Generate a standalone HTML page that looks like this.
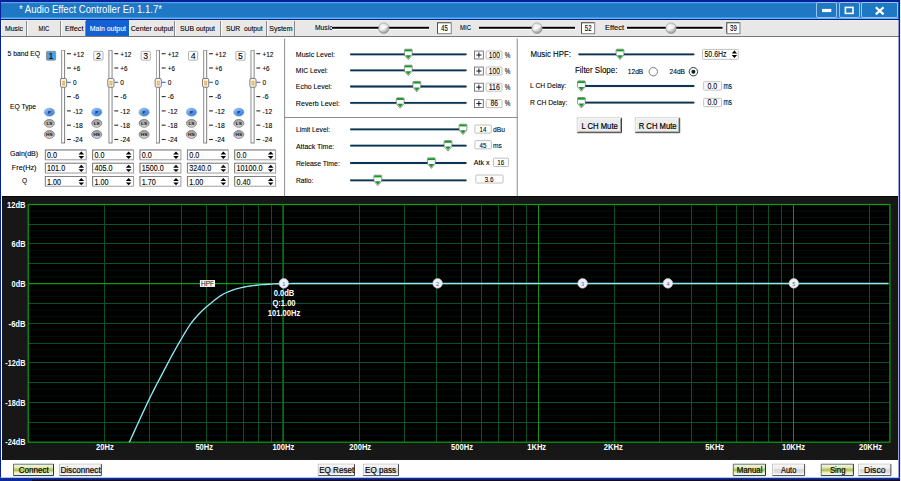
<!DOCTYPE html><html><head><meta charset="utf-8"><title>Audio Effect Controller En 1.1.7</title><style>
*{box-sizing:border-box;margin:0;padding:0}
html,body{width:901px;height:481px;overflow:hidden;background:#fff}
body{font-family:"Liberation Sans",sans-serif;font-size:8px;color:#000;position:relative}
.a{position:absolute}
.tab{position:absolute;top:20.5px;height:15.5px;background:#e8e8e8;border-right:1px solid #8a8a8a;border-left:1px solid #fafafa}
.sp{position:absolute;height:11px;background:#fff;border:1px solid #8c8c8c;border-top-color:#6a6a6a;border-left-color:#6a6a6a}
.vb{position:absolute;background:#fff;border:1px solid #c8c8c8;border-radius:1.5px}
.btn{position:absolute;border:1px solid #fff;border-right-color:#555;border-bottom-color:#555;background:#ececec;box-shadow:0 0 0 0.6px #8a8a8a}
svg text{white-space:pre}
</style></head><body>
<div class="a" style="left:0;top:0;width:900px;height:481px;background:#06209a"></div>
<div class="a" style="left:1px;top:2px;width:898px;height:17px;background:linear-gradient(#5aa4e8 0,#5aa4e8 1.1px,#1e78c4 1.6px,#1e78c4 15.2px,#5cb4f0 15.8px,#5cb4f0 17px)"></div>
<div class="a" style="left:1px;top:20px;width:898px;height:17px;background:#e8e8e8;border-top:0.5px solid #f4ecd8;border-bottom:1px solid #767676"></div>
<div class="a" style="left:1.2px;top:37px;width:897.6px;height:441px;background:#fff"></div>
<div class="a" style="left:2.1px;top:196.3px;width:895.8px;height:264px;background:#171717;border-top:1px solid #050505"></div>
<div class="a" style="left:815.6px;top:2.2px;width:21.6px;height:16.3px;border:1px solid #9cc4f0;border-radius:2px;background:#1e78c4"></div>
<div class="a" style="left:839px;top:2.2px;width:20.6px;height:16.3px;border:1px solid #9cc4f0;border-radius:2px;background:#1e78c4"></div>
<div class="a" style="left:861px;top:2.2px;width:37px;height:16.3px;border:1px solid #9cc4f0;border-radius:2px;background:#1e78c4"></div>
<div class="tab" style="left:1px;width:26px;"></div>
<div class="tab" style="left:27px;width:34px;"></div>
<div class="tab" style="left:61px;width:25px;"></div>
<div class="tab" style="left:86px;width:42.5px;background:#1262d4;border-left-color:#1262d4;border-right-color:#1262d4;top:20px;height:16.2px"></div>
<div class="tab" style="left:128.5px;width:46px;"></div>
<div class="tab" style="left:174.5px;width:46.5px;"></div>
<div class="tab" style="left:221px;width:46px;"></div>
<div class="tab" style="left:267px;width:28px;"></div>
<svg class="a" style="left:0;top:0" width="901" height="481" viewBox="0 0 901 481"><rect x="898.6" y="0" width="1.5" height="481" fill="#06209a"/><rect x="0" y="477.5" width="900" height="1" fill="#6a8ad8"/><rect x="0" y="478.1" width="900" height="3" fill="#0a2a9c"/><rect x="32" y="479.6" width="868" height="1.5" fill="#140a1c"/><rect x="822" y="8.9" width="9.3" height="3.2" fill="#fff"/><rect x="845.4" y="7.4" width="7.6" height="6" fill="none" stroke="#fff" stroke-width="1.6"/><path d="M875.8 7.2L883.6 14.4M883.6 7.2L875.8 14.4" stroke="#fff" stroke-width="2.2"/><text x="19.00" y="13.10" textLength="143.00" lengthAdjust="spacingAndGlyphs" style="font-family:'Liberation Sans',sans-serif;font-size:10.4px;fill:#fff" stroke="none">* Audio Effect Controller En 1.1.7*</text><text x="5.00" y="30.60" textLength="18.00" lengthAdjust="spacingAndGlyphs" style="font-family:'Liberation Sans',sans-serif;font-size:7.6px;fill:#000"  stroke="#000" stroke-width="0.1">Music</text><text x="38.50" y="30.60" textLength="10.80" lengthAdjust="spacingAndGlyphs" style="font-family:'Liberation Sans',sans-serif;font-size:7.6px;fill:#000"  stroke="#000" stroke-width="0.1">MIC</text><text x="65.00" y="30.60" textLength="18.50" lengthAdjust="spacingAndGlyphs" style="font-family:'Liberation Sans',sans-serif;font-size:7.6px;fill:#000"  stroke="#000" stroke-width="0.1">Effect</text><text x="89.80" y="30.60" textLength="36.20" lengthAdjust="spacingAndGlyphs" style="font-family:'Liberation Sans',sans-serif;font-size:7.6px;fill:#fff"  stroke="#fff" stroke-width="0.1">Main output</text><text x="130.80" y="30.60" textLength="42.50" lengthAdjust="spacingAndGlyphs" style="font-family:'Liberation Sans',sans-serif;font-size:7.6px;fill:#000"  stroke="#000" stroke-width="0.1">Center output</text><text x="180.00" y="30.60" textLength="35.00" lengthAdjust="spacingAndGlyphs" style="font-family:'Liberation Sans',sans-serif;font-size:7.6px;fill:#000"  stroke="#000" stroke-width="0.1">SUB output</text><text x="226.00" y="30.60" textLength="36.70" lengthAdjust="spacingAndGlyphs" style="font-family:'Liberation Sans',sans-serif;font-size:7.6px;fill:#000"  stroke="#000" stroke-width="0.1">SUR  output</text><text x="269.30" y="30.60" textLength="23.20" lengthAdjust="spacingAndGlyphs" style="font-family:'Liberation Sans',sans-serif;font-size:7.6px;fill:#000"  stroke="#000" stroke-width="0.1">System</text><defs><radialGradient id="kg" cx="0.4" cy="0.35" r="0.7"><stop offset="0" stop-color="#fff"/><stop offset="0.5" stop-color="#dcdcdc"/><stop offset="1" stop-color="#8a8a8a"/></radialGradient></defs><text x="315.00" y="30.30" textLength="17.60" lengthAdjust="spacingAndGlyphs" style="font-family:'Liberation Sans',sans-serif;font-size:7.6px;fill:#000"  stroke="#000" stroke-width="0.1">Music</text><rect x="332" y="25.9" width="97" height="3.9" fill="#fff"/><rect x="332" y="26.75" width="97" height="2" fill="#000"/><circle cx="383.8" cy="28.2" r="5.3" fill="url(#kg)" stroke="#8a8a8a" stroke-width="0.5"/><path d="M380.2 29.7L387.6 25.599999999999998" stroke="#fff" stroke-width="1.6" opacity="0.8"/><rect x="437.00" y="22.30" width="14.80" height="11.90" fill="#8c8c8c"/><rect x="437.00" y="22.30" width="13.80" height="10.90" fill="#505050"/><rect x="438.00" y="23.30" width="12.80" height="9.90" fill="#fff"/><text x="441.00" y="31.00" textLength="6.80" lengthAdjust="spacingAndGlyphs" style="font-family:'Liberation Sans',sans-serif;font-size:8.4px;fill:#000"  stroke="#000" stroke-width="0.1">45</text><text x="460.00" y="30.30" textLength="11.00" lengthAdjust="spacingAndGlyphs" style="font-family:'Liberation Sans',sans-serif;font-size:7.6px;fill:#000"  stroke="#000" stroke-width="0.1">MIC</text><rect x="479" y="25.9" width="96" height="3.9" fill="#fff"/><rect x="479" y="26.75" width="96" height="2" fill="#000"/><circle cx="537" cy="28.2" r="5.3" fill="url(#kg)" stroke="#8a8a8a" stroke-width="0.5"/><path d="M533.4 29.7L540.8 25.599999999999998" stroke="#fff" stroke-width="1.6" opacity="0.8"/><rect x="581.00" y="22.30" width="14.20" height="11.90" fill="#8c8c8c"/><rect x="581.00" y="22.30" width="13.20" height="10.90" fill="#505050"/><rect x="582.00" y="23.30" width="12.20" height="9.90" fill="#fff"/><text x="584.80" y="31.00" textLength="6.80" lengthAdjust="spacingAndGlyphs" style="font-family:'Liberation Sans',sans-serif;font-size:8.4px;fill:#000"  stroke="#000" stroke-width="0.1">52</text><text x="605.00" y="30.30" textLength="19.00" lengthAdjust="spacingAndGlyphs" style="font-family:'Liberation Sans',sans-serif;font-size:7.6px;fill:#000"  stroke="#000" stroke-width="0.1">Effect</text><rect x="627" y="25.9" width="95.5" height="3.9" fill="#fff"/><rect x="627" y="26.75" width="95.5" height="2" fill="#000"/><circle cx="671" cy="28.2" r="5.3" fill="url(#kg)" stroke="#8a8a8a" stroke-width="0.5"/><path d="M667.4 29.7L674.8 25.599999999999998" stroke="#fff" stroke-width="1.6" opacity="0.8"/><rect x="726.30" y="22.30" width="14.20" height="11.90" fill="#8c8c8c"/><rect x="726.30" y="22.30" width="13.20" height="10.90" fill="#505050"/><rect x="727.30" y="23.30" width="12.20" height="9.90" fill="#fff"/><text x="730.00" y="31.00" textLength="6.80" lengthAdjust="spacingAndGlyphs" style="font-family:'Liberation Sans',sans-serif;font-size:8.4px;fill:#000"  stroke="#000" stroke-width="0.1">39</text><text x="7.50" y="55.80" textLength="32.50" lengthAdjust="spacingAndGlyphs" style="font-family:'Liberation Sans',sans-serif;font-size:7.8px;fill:#000"  stroke="#000" stroke-width="0.1">5 band EQ</text><text x="9.90" y="108.60" textLength="26.20" lengthAdjust="spacingAndGlyphs" style="font-family:'Liberation Sans',sans-serif;font-size:7.8px;fill:#000"  stroke="#000" stroke-width="0.1">EQ Type</text><text x="9.90" y="155.60" textLength="28.30" lengthAdjust="spacingAndGlyphs" style="font-family:'Liberation Sans',sans-serif;font-size:7.8px;fill:#000"  stroke="#000" stroke-width="0.1">Gain(dB)</text><text x="11.80" y="170.00" textLength="24.70" lengthAdjust="spacingAndGlyphs" style="font-family:'Liberation Sans',sans-serif;font-size:7.8px;fill:#000"  stroke="#000" stroke-width="0.1">Fre(Hz)</text><text x="21.90" y="182.70" textLength="5.10" lengthAdjust="spacingAndGlyphs" style="font-family:'Liberation Sans',sans-serif;font-size:7.8px;fill:#000"  stroke="#000" stroke-width="0.1">Q</text><defs><linearGradient id="pb" x1="0.1" y1="0" x2="0.9" y2="1"><stop offset="0" stop-color="#9ccafa"/><stop offset="0.5" stop-color="#5c9ae6"/><stop offset="1" stop-color="#3c78d0"/></linearGradient><linearGradient id="gb" x1="0" y1="0" x2="0" y2="1"><stop offset="0" stop-color="#a0a0a0"/><stop offset="0.5" stop-color="#b4b4b4"/><stop offset="1" stop-color="#dedede"/></linearGradient></defs><rect x="46.45" y="51.35" width="9.20" height="8.80" rx="1" fill="#4a9fe6" stroke="#8a8a8a" stroke-width="0.9"/><text x="48.60" y="59.10" textLength="4.90" lengthAdjust="spacingAndGlyphs" style="font-family:'Liberation Sans',sans-serif;font-size:9.2px;fill:#000"  stroke="#000" stroke-width="0.1">1</text><rect x="61.30" y="50.00" width="3.80" height="93.40" fill="#646464"/><rect x="61.30" y="50.00" width="2.90" height="92.50" fill="#a4a4a4"/><rect x="62.20" y="50.90" width="2.00" height="91.60" fill="#fff"/><rect x="67.00" y="53.15" width="3.9" height="1.1" fill="#2a2a2a"/><text x="73.00" y="56.50" textLength="11.00" lengthAdjust="spacingAndGlyphs" style="font-family:'Liberation Sans',sans-serif;font-size:7.7px;fill:#000"  stroke="#000" stroke-width="0.1">+12</text><rect x="67.00" y="67.45" width="3.9" height="1.1" fill="#2a2a2a"/><text x="73.00" y="70.80" textLength="7.20" lengthAdjust="spacingAndGlyphs" style="font-family:'Liberation Sans',sans-serif;font-size:7.7px;fill:#000"  stroke="#000" stroke-width="0.1">+6</text><rect x="67.00" y="81.75" width="3.9" height="1.1" fill="#2a6ae0"/><text x="73.00" y="85.10" textLength="3.60" lengthAdjust="spacingAndGlyphs" style="font-family:'Liberation Sans',sans-serif;font-size:7.7px;fill:#000"  stroke="#000" stroke-width="0.1">0</text><rect x="67.00" y="96.05" width="3.9" height="1.1" fill="#2a2a2a"/><text x="73.00" y="99.40" textLength="6.20" lengthAdjust="spacingAndGlyphs" style="font-family:'Liberation Sans',sans-serif;font-size:7.7px;fill:#000"  stroke="#000" stroke-width="0.1">-6</text><rect x="67.00" y="110.35" width="3.9" height="1.1" fill="#2a2a2a"/><text x="73.00" y="113.70" textLength="9.80" lengthAdjust="spacingAndGlyphs" style="font-family:'Liberation Sans',sans-serif;font-size:7.7px;fill:#000"  stroke="#000" stroke-width="0.1">-12</text><rect x="67.00" y="124.65" width="3.9" height="1.1" fill="#2a2a2a"/><text x="73.00" y="128.00" textLength="9.80" lengthAdjust="spacingAndGlyphs" style="font-family:'Liberation Sans',sans-serif;font-size:7.7px;fill:#000"  stroke="#000" stroke-width="0.1">-18</text><rect x="67.00" y="138.95" width="3.9" height="1.1" fill="#2a2a2a"/><text x="73.00" y="142.30" textLength="9.80" lengthAdjust="spacingAndGlyphs" style="font-family:'Liberation Sans',sans-serif;font-size:7.7px;fill:#000"  stroke="#000" stroke-width="0.1">-24</text><rect x="60.45" y="78.45" width="6.20" height="8.80" rx="1.5" fill="#f6f6f2" stroke="#6e6e6e" stroke-width="0.9"/><rect x="62.10" y="80.7" width="3" height="4.8" fill="#f6d4a0"/><rect x="62.10" y="81" width="3" height="0.9" fill="#eca850"/><rect x="62.10" y="82.7" width="3" height="0.9" fill="#eca850"/><rect x="62.10" y="84.3" width="3" height="0.9" fill="#eca850"/><ellipse cx="49.40" cy="112.20" rx="5.2" ry="4.1" fill="url(#pb)" stroke="#7aa4e0" stroke-width="0.5"/><text x="47.90" y="113.60" textLength="3.00" lengthAdjust="spacingAndGlyphs" style="font-family:'Liberation Sans',sans-serif;font-size:4.2px;font-weight:bold;fill:#10203a" >P</text><ellipse cx="49.40" cy="123.35" rx="5" ry="3.9" fill="url(#gb)" stroke="#747474" stroke-width="0.8"/><text x="46.40" y="124.75" textLength="6.00" lengthAdjust="spacingAndGlyphs" style="font-family:'Liberation Sans',sans-serif;font-size:4.2px;font-weight:bold;fill:#111" >LS</text><ellipse cx="49.40" cy="134.50" rx="5" ry="3.9" fill="url(#gb)" stroke="#747474" stroke-width="0.8"/><text x="46.05" y="135.90" textLength="6.70" lengthAdjust="spacingAndGlyphs" style="font-family:'Liberation Sans',sans-serif;font-size:4.2px;font-weight:bold;fill:#111" >HS</text><rect x="44.90" y="149.60" width="41.80" height="10.70" fill="#9c9c9c"/><rect x="44.90" y="149.60" width="40.90" height="9.80" fill="#727272"/><rect x="45.80" y="150.50" width="40.00" height="8.90" fill="#fff"/><text x="47.10" y="158.10" textLength="10.03" lengthAdjust="spacingAndGlyphs" style="font-family:'Liberation Sans',sans-serif;font-size:8.2px;fill:#000"  stroke="#000" stroke-width="0.1">0.0</text><path d="M78.50 154.50h5.6l-2.8-2.9zM78.50 156.00h5.6l-2.8 2.9z" fill="#000"/><rect x="44.90" y="162.80" width="41.80" height="10.70" fill="#9c9c9c"/><rect x="44.90" y="162.80" width="40.90" height="9.80" fill="#727272"/><rect x="45.80" y="163.70" width="40.00" height="8.90" fill="#fff"/><text x="47.10" y="171.30" textLength="18.05" lengthAdjust="spacingAndGlyphs" style="font-family:'Liberation Sans',sans-serif;font-size:8.2px;fill:#000"  stroke="#000" stroke-width="0.1">101.0</text><path d="M78.50 167.70h5.6l-2.8-2.9zM78.50 169.20h5.6l-2.8 2.9z" fill="#000"/><rect x="44.90" y="176.00" width="41.80" height="10.70" fill="#9c9c9c"/><rect x="44.90" y="176.00" width="40.90" height="9.80" fill="#727272"/><rect x="45.80" y="176.90" width="40.00" height="8.90" fill="#fff"/><text x="47.10" y="184.50" textLength="14.04" lengthAdjust="spacingAndGlyphs" style="font-family:'Liberation Sans',sans-serif;font-size:8.2px;fill:#000"  stroke="#000" stroke-width="0.1">1.00</text><path d="M78.50 180.90h5.6l-2.8-2.9zM78.50 182.40h5.6l-2.8 2.9z" fill="#000"/><rect x="93.80" y="51.35" width="9.20" height="8.80" rx="1" fill="#fff" stroke="#a8a8a8" stroke-width="0.9"/><text x="95.95" y="59.10" textLength="4.90" lengthAdjust="spacingAndGlyphs" style="font-family:'Liberation Sans',sans-serif;font-size:9.2px;fill:#000"  stroke="#000" stroke-width="0.1">2</text><rect x="108.65" y="50.00" width="3.80" height="93.40" fill="#646464"/><rect x="108.65" y="50.00" width="2.90" height="92.50" fill="#a4a4a4"/><rect x="109.55" y="50.90" width="2.00" height="91.60" fill="#fff"/><rect x="114.35" y="53.15" width="3.9" height="1.1" fill="#2a2a2a"/><text x="120.35" y="56.50" textLength="11.00" lengthAdjust="spacingAndGlyphs" style="font-family:'Liberation Sans',sans-serif;font-size:7.7px;fill:#000"  stroke="#000" stroke-width="0.1">+12</text><rect x="114.35" y="67.45" width="3.9" height="1.1" fill="#2a2a2a"/><text x="120.35" y="70.80" textLength="7.20" lengthAdjust="spacingAndGlyphs" style="font-family:'Liberation Sans',sans-serif;font-size:7.7px;fill:#000"  stroke="#000" stroke-width="0.1">+6</text><rect x="114.35" y="81.75" width="3.9" height="1.1" fill="#2a6ae0"/><text x="120.35" y="85.10" textLength="3.60" lengthAdjust="spacingAndGlyphs" style="font-family:'Liberation Sans',sans-serif;font-size:7.7px;fill:#000"  stroke="#000" stroke-width="0.1">0</text><rect x="114.35" y="96.05" width="3.9" height="1.1" fill="#2a2a2a"/><text x="120.35" y="99.40" textLength="6.20" lengthAdjust="spacingAndGlyphs" style="font-family:'Liberation Sans',sans-serif;font-size:7.7px;fill:#000"  stroke="#000" stroke-width="0.1">-6</text><rect x="114.35" y="110.35" width="3.9" height="1.1" fill="#2a2a2a"/><text x="120.35" y="113.70" textLength="9.80" lengthAdjust="spacingAndGlyphs" style="font-family:'Liberation Sans',sans-serif;font-size:7.7px;fill:#000"  stroke="#000" stroke-width="0.1">-12</text><rect x="114.35" y="124.65" width="3.9" height="1.1" fill="#2a2a2a"/><text x="120.35" y="128.00" textLength="9.80" lengthAdjust="spacingAndGlyphs" style="font-family:'Liberation Sans',sans-serif;font-size:7.7px;fill:#000"  stroke="#000" stroke-width="0.1">-18</text><rect x="114.35" y="138.95" width="3.9" height="1.1" fill="#2a2a2a"/><text x="120.35" y="142.30" textLength="9.80" lengthAdjust="spacingAndGlyphs" style="font-family:'Liberation Sans',sans-serif;font-size:7.7px;fill:#000"  stroke="#000" stroke-width="0.1">-24</text><rect x="107.80" y="78.45" width="6.20" height="8.80" rx="1.5" fill="#f6f6f2" stroke="#6e6e6e" stroke-width="0.9"/><rect x="109.45" y="80.7" width="3" height="4.8" fill="#f6d4a0"/><rect x="109.45" y="81" width="3" height="0.9" fill="#eca850"/><rect x="109.45" y="82.7" width="3" height="0.9" fill="#eca850"/><rect x="109.45" y="84.3" width="3" height="0.9" fill="#eca850"/><ellipse cx="96.75" cy="112.20" rx="5.2" ry="4.1" fill="url(#pb)" stroke="#7aa4e0" stroke-width="0.5"/><text x="95.25" y="113.60" textLength="3.00" lengthAdjust="spacingAndGlyphs" style="font-family:'Liberation Sans',sans-serif;font-size:4.2px;font-weight:bold;fill:#10203a" >P</text><ellipse cx="96.75" cy="123.35" rx="5" ry="3.9" fill="url(#gb)" stroke="#747474" stroke-width="0.8"/><text x="93.75" y="124.75" textLength="6.00" lengthAdjust="spacingAndGlyphs" style="font-family:'Liberation Sans',sans-serif;font-size:4.2px;font-weight:bold;fill:#111" >LS</text><ellipse cx="96.75" cy="134.50" rx="5" ry="3.9" fill="url(#gb)" stroke="#747474" stroke-width="0.8"/><text x="93.40" y="135.90" textLength="6.70" lengthAdjust="spacingAndGlyphs" style="font-family:'Liberation Sans',sans-serif;font-size:4.2px;font-weight:bold;fill:#111" >HS</text><rect x="92.25" y="149.60" width="41.80" height="10.70" fill="#9c9c9c"/><rect x="92.25" y="149.60" width="40.90" height="9.80" fill="#727272"/><rect x="93.15" y="150.50" width="40.00" height="8.90" fill="#fff"/><text x="94.45" y="158.10" textLength="10.03" lengthAdjust="spacingAndGlyphs" style="font-family:'Liberation Sans',sans-serif;font-size:8.2px;fill:#000"  stroke="#000" stroke-width="0.1">0.0</text><path d="M125.85 154.50h5.6l-2.8-2.9zM125.85 156.00h5.6l-2.8 2.9z" fill="#000"/><rect x="92.25" y="162.80" width="41.80" height="10.70" fill="#9c9c9c"/><rect x="92.25" y="162.80" width="40.90" height="9.80" fill="#727272"/><rect x="93.15" y="163.70" width="40.00" height="8.90" fill="#fff"/><text x="94.45" y="171.30" textLength="18.05" lengthAdjust="spacingAndGlyphs" style="font-family:'Liberation Sans',sans-serif;font-size:8.2px;fill:#000"  stroke="#000" stroke-width="0.1">405.0</text><path d="M125.85 167.70h5.6l-2.8-2.9zM125.85 169.20h5.6l-2.8 2.9z" fill="#000"/><rect x="92.25" y="176.00" width="41.80" height="10.70" fill="#9c9c9c"/><rect x="92.25" y="176.00" width="40.90" height="9.80" fill="#727272"/><rect x="93.15" y="176.90" width="40.00" height="8.90" fill="#fff"/><text x="94.45" y="184.50" textLength="14.04" lengthAdjust="spacingAndGlyphs" style="font-family:'Liberation Sans',sans-serif;font-size:8.2px;fill:#000"  stroke="#000" stroke-width="0.1">1.00</text><path d="M125.85 180.90h5.6l-2.8-2.9zM125.85 182.40h5.6l-2.8 2.9z" fill="#000"/><rect x="141.15" y="51.35" width="9.20" height="8.80" rx="1" fill="#fff" stroke="#a8a8a8" stroke-width="0.9"/><text x="143.30" y="59.10" textLength="4.90" lengthAdjust="spacingAndGlyphs" style="font-family:'Liberation Sans',sans-serif;font-size:9.2px;fill:#000"  stroke="#000" stroke-width="0.1">3</text><rect x="156.00" y="50.00" width="3.80" height="93.40" fill="#646464"/><rect x="156.00" y="50.00" width="2.90" height="92.50" fill="#a4a4a4"/><rect x="156.90" y="50.90" width="2.00" height="91.60" fill="#fff"/><rect x="161.70" y="53.15" width="3.9" height="1.1" fill="#2a2a2a"/><text x="167.70" y="56.50" textLength="11.00" lengthAdjust="spacingAndGlyphs" style="font-family:'Liberation Sans',sans-serif;font-size:7.7px;fill:#000"  stroke="#000" stroke-width="0.1">+12</text><rect x="161.70" y="67.45" width="3.9" height="1.1" fill="#2a2a2a"/><text x="167.70" y="70.80" textLength="7.20" lengthAdjust="spacingAndGlyphs" style="font-family:'Liberation Sans',sans-serif;font-size:7.7px;fill:#000"  stroke="#000" stroke-width="0.1">+6</text><rect x="161.70" y="81.75" width="3.9" height="1.1" fill="#2a6ae0"/><text x="167.70" y="85.10" textLength="3.60" lengthAdjust="spacingAndGlyphs" style="font-family:'Liberation Sans',sans-serif;font-size:7.7px;fill:#000"  stroke="#000" stroke-width="0.1">0</text><rect x="161.70" y="96.05" width="3.9" height="1.1" fill="#2a2a2a"/><text x="167.70" y="99.40" textLength="6.20" lengthAdjust="spacingAndGlyphs" style="font-family:'Liberation Sans',sans-serif;font-size:7.7px;fill:#000"  stroke="#000" stroke-width="0.1">-6</text><rect x="161.70" y="110.35" width="3.9" height="1.1" fill="#2a2a2a"/><text x="167.70" y="113.70" textLength="9.80" lengthAdjust="spacingAndGlyphs" style="font-family:'Liberation Sans',sans-serif;font-size:7.7px;fill:#000"  stroke="#000" stroke-width="0.1">-12</text><rect x="161.70" y="124.65" width="3.9" height="1.1" fill="#2a2a2a"/><text x="167.70" y="128.00" textLength="9.80" lengthAdjust="spacingAndGlyphs" style="font-family:'Liberation Sans',sans-serif;font-size:7.7px;fill:#000"  stroke="#000" stroke-width="0.1">-18</text><rect x="161.70" y="138.95" width="3.9" height="1.1" fill="#2a2a2a"/><text x="167.70" y="142.30" textLength="9.80" lengthAdjust="spacingAndGlyphs" style="font-family:'Liberation Sans',sans-serif;font-size:7.7px;fill:#000"  stroke="#000" stroke-width="0.1">-24</text><rect x="155.15" y="78.45" width="6.20" height="8.80" rx="1.5" fill="#f6f6f2" stroke="#6e6e6e" stroke-width="0.9"/><rect x="156.80" y="80.7" width="3" height="4.8" fill="#f6d4a0"/><rect x="156.80" y="81" width="3" height="0.9" fill="#eca850"/><rect x="156.80" y="82.7" width="3" height="0.9" fill="#eca850"/><rect x="156.80" y="84.3" width="3" height="0.9" fill="#eca850"/><ellipse cx="144.10" cy="112.20" rx="5.2" ry="4.1" fill="url(#pb)" stroke="#7aa4e0" stroke-width="0.5"/><text x="142.60" y="113.60" textLength="3.00" lengthAdjust="spacingAndGlyphs" style="font-family:'Liberation Sans',sans-serif;font-size:4.2px;font-weight:bold;fill:#10203a" >P</text><ellipse cx="144.10" cy="123.35" rx="5" ry="3.9" fill="url(#gb)" stroke="#747474" stroke-width="0.8"/><text x="141.10" y="124.75" textLength="6.00" lengthAdjust="spacingAndGlyphs" style="font-family:'Liberation Sans',sans-serif;font-size:4.2px;font-weight:bold;fill:#111" >LS</text><ellipse cx="144.10" cy="134.50" rx="5" ry="3.9" fill="url(#gb)" stroke="#747474" stroke-width="0.8"/><text x="140.75" y="135.90" textLength="6.70" lengthAdjust="spacingAndGlyphs" style="font-family:'Liberation Sans',sans-serif;font-size:4.2px;font-weight:bold;fill:#111" >HS</text><rect x="139.60" y="149.60" width="41.80" height="10.70" fill="#9c9c9c"/><rect x="139.60" y="149.60" width="40.90" height="9.80" fill="#727272"/><rect x="140.50" y="150.50" width="40.00" height="8.90" fill="#fff"/><text x="141.80" y="158.10" textLength="10.03" lengthAdjust="spacingAndGlyphs" style="font-family:'Liberation Sans',sans-serif;font-size:8.2px;fill:#000"  stroke="#000" stroke-width="0.1">0.0</text><path d="M173.20 154.50h5.6l-2.8-2.9zM173.20 156.00h5.6l-2.8 2.9z" fill="#000"/><rect x="139.60" y="162.80" width="41.80" height="10.70" fill="#9c9c9c"/><rect x="139.60" y="162.80" width="40.90" height="9.80" fill="#727272"/><rect x="140.50" y="163.70" width="40.00" height="8.90" fill="#fff"/><text x="141.80" y="171.30" textLength="22.07" lengthAdjust="spacingAndGlyphs" style="font-family:'Liberation Sans',sans-serif;font-size:8.2px;fill:#000"  stroke="#000" stroke-width="0.1">1500.0</text><path d="M173.20 167.70h5.6l-2.8-2.9zM173.20 169.20h5.6l-2.8 2.9z" fill="#000"/><rect x="139.60" y="176.00" width="41.80" height="10.70" fill="#9c9c9c"/><rect x="139.60" y="176.00" width="40.90" height="9.80" fill="#727272"/><rect x="140.50" y="176.90" width="40.00" height="8.90" fill="#fff"/><text x="141.80" y="184.50" textLength="14.04" lengthAdjust="spacingAndGlyphs" style="font-family:'Liberation Sans',sans-serif;font-size:8.2px;fill:#000"  stroke="#000" stroke-width="0.1">1.70</text><path d="M173.20 180.90h5.6l-2.8-2.9zM173.20 182.40h5.6l-2.8 2.9z" fill="#000"/><rect x="188.50" y="51.35" width="9.20" height="8.80" rx="1" fill="#fff" stroke="#a8a8a8" stroke-width="0.9"/><text x="190.65" y="59.10" textLength="4.90" lengthAdjust="spacingAndGlyphs" style="font-family:'Liberation Sans',sans-serif;font-size:9.2px;fill:#000"  stroke="#000" stroke-width="0.1">4</text><rect x="203.35" y="50.00" width="3.80" height="93.40" fill="#646464"/><rect x="203.35" y="50.00" width="2.90" height="92.50" fill="#a4a4a4"/><rect x="204.25" y="50.90" width="2.00" height="91.60" fill="#fff"/><rect x="209.05" y="53.15" width="3.9" height="1.1" fill="#2a2a2a"/><text x="215.05" y="56.50" textLength="11.00" lengthAdjust="spacingAndGlyphs" style="font-family:'Liberation Sans',sans-serif;font-size:7.7px;fill:#000"  stroke="#000" stroke-width="0.1">+12</text><rect x="209.05" y="67.45" width="3.9" height="1.1" fill="#2a2a2a"/><text x="215.05" y="70.80" textLength="7.20" lengthAdjust="spacingAndGlyphs" style="font-family:'Liberation Sans',sans-serif;font-size:7.7px;fill:#000"  stroke="#000" stroke-width="0.1">+6</text><rect x="209.05" y="81.75" width="3.9" height="1.1" fill="#2a6ae0"/><text x="215.05" y="85.10" textLength="3.60" lengthAdjust="spacingAndGlyphs" style="font-family:'Liberation Sans',sans-serif;font-size:7.7px;fill:#000"  stroke="#000" stroke-width="0.1">0</text><rect x="209.05" y="96.05" width="3.9" height="1.1" fill="#2a2a2a"/><text x="215.05" y="99.40" textLength="6.20" lengthAdjust="spacingAndGlyphs" style="font-family:'Liberation Sans',sans-serif;font-size:7.7px;fill:#000"  stroke="#000" stroke-width="0.1">-6</text><rect x="209.05" y="110.35" width="3.9" height="1.1" fill="#2a2a2a"/><text x="215.05" y="113.70" textLength="9.80" lengthAdjust="spacingAndGlyphs" style="font-family:'Liberation Sans',sans-serif;font-size:7.7px;fill:#000"  stroke="#000" stroke-width="0.1">-12</text><rect x="209.05" y="124.65" width="3.9" height="1.1" fill="#2a2a2a"/><text x="215.05" y="128.00" textLength="9.80" lengthAdjust="spacingAndGlyphs" style="font-family:'Liberation Sans',sans-serif;font-size:7.7px;fill:#000"  stroke="#000" stroke-width="0.1">-18</text><rect x="209.05" y="138.95" width="3.9" height="1.1" fill="#2a2a2a"/><text x="215.05" y="142.30" textLength="9.80" lengthAdjust="spacingAndGlyphs" style="font-family:'Liberation Sans',sans-serif;font-size:7.7px;fill:#000"  stroke="#000" stroke-width="0.1">-24</text><rect x="202.50" y="78.45" width="6.20" height="8.80" rx="1.5" fill="#f6f6f2" stroke="#6e6e6e" stroke-width="0.9"/><rect x="204.15" y="80.7" width="3" height="4.8" fill="#f6d4a0"/><rect x="204.15" y="81" width="3" height="0.9" fill="#eca850"/><rect x="204.15" y="82.7" width="3" height="0.9" fill="#eca850"/><rect x="204.15" y="84.3" width="3" height="0.9" fill="#eca850"/><ellipse cx="191.45" cy="112.20" rx="5.2" ry="4.1" fill="url(#pb)" stroke="#7aa4e0" stroke-width="0.5"/><text x="189.95" y="113.60" textLength="3.00" lengthAdjust="spacingAndGlyphs" style="font-family:'Liberation Sans',sans-serif;font-size:4.2px;font-weight:bold;fill:#10203a" >P</text><ellipse cx="191.45" cy="123.35" rx="5" ry="3.9" fill="url(#gb)" stroke="#747474" stroke-width="0.8"/><text x="188.45" y="124.75" textLength="6.00" lengthAdjust="spacingAndGlyphs" style="font-family:'Liberation Sans',sans-serif;font-size:4.2px;font-weight:bold;fill:#111" >LS</text><ellipse cx="191.45" cy="134.50" rx="5" ry="3.9" fill="url(#gb)" stroke="#747474" stroke-width="0.8"/><text x="188.10" y="135.90" textLength="6.70" lengthAdjust="spacingAndGlyphs" style="font-family:'Liberation Sans',sans-serif;font-size:4.2px;font-weight:bold;fill:#111" >HS</text><rect x="186.95" y="149.60" width="41.80" height="10.70" fill="#9c9c9c"/><rect x="186.95" y="149.60" width="40.90" height="9.80" fill="#727272"/><rect x="187.85" y="150.50" width="40.00" height="8.90" fill="#fff"/><text x="189.15" y="158.10" textLength="10.03" lengthAdjust="spacingAndGlyphs" style="font-family:'Liberation Sans',sans-serif;font-size:8.2px;fill:#000"  stroke="#000" stroke-width="0.1">0.0</text><path d="M220.55 154.50h5.6l-2.8-2.9zM220.55 156.00h5.6l-2.8 2.9z" fill="#000"/><rect x="186.95" y="162.80" width="41.80" height="10.70" fill="#9c9c9c"/><rect x="186.95" y="162.80" width="40.90" height="9.80" fill="#727272"/><rect x="187.85" y="163.70" width="40.00" height="8.90" fill="#fff"/><text x="189.15" y="171.30" textLength="22.07" lengthAdjust="spacingAndGlyphs" style="font-family:'Liberation Sans',sans-serif;font-size:8.2px;fill:#000"  stroke="#000" stroke-width="0.1">3240.0</text><path d="M220.55 167.70h5.6l-2.8-2.9zM220.55 169.20h5.6l-2.8 2.9z" fill="#000"/><rect x="186.95" y="176.00" width="41.80" height="10.70" fill="#9c9c9c"/><rect x="186.95" y="176.00" width="40.90" height="9.80" fill="#727272"/><rect x="187.85" y="176.90" width="40.00" height="8.90" fill="#fff"/><text x="189.15" y="184.50" textLength="14.04" lengthAdjust="spacingAndGlyphs" style="font-family:'Liberation Sans',sans-serif;font-size:8.2px;fill:#000"  stroke="#000" stroke-width="0.1">1.00</text><path d="M220.55 180.90h5.6l-2.8-2.9zM220.55 182.40h5.6l-2.8 2.9z" fill="#000"/><rect x="235.85" y="51.35" width="9.20" height="8.80" rx="1" fill="#fff" stroke="#a8a8a8" stroke-width="0.9"/><text x="238.00" y="59.10" textLength="4.90" lengthAdjust="spacingAndGlyphs" style="font-family:'Liberation Sans',sans-serif;font-size:9.2px;fill:#000"  stroke="#000" stroke-width="0.1">5</text><rect x="250.70" y="50.00" width="3.80" height="93.40" fill="#646464"/><rect x="250.70" y="50.00" width="2.90" height="92.50" fill="#a4a4a4"/><rect x="251.60" y="50.90" width="2.00" height="91.60" fill="#fff"/><rect x="256.40" y="53.15" width="3.9" height="1.1" fill="#2a2a2a"/><text x="262.40" y="56.50" textLength="11.00" lengthAdjust="spacingAndGlyphs" style="font-family:'Liberation Sans',sans-serif;font-size:7.7px;fill:#000"  stroke="#000" stroke-width="0.1">+12</text><rect x="256.40" y="67.45" width="3.9" height="1.1" fill="#2a2a2a"/><text x="262.40" y="70.80" textLength="7.20" lengthAdjust="spacingAndGlyphs" style="font-family:'Liberation Sans',sans-serif;font-size:7.7px;fill:#000"  stroke="#000" stroke-width="0.1">+6</text><rect x="256.40" y="81.75" width="3.9" height="1.1" fill="#2a6ae0"/><text x="262.40" y="85.10" textLength="3.60" lengthAdjust="spacingAndGlyphs" style="font-family:'Liberation Sans',sans-serif;font-size:7.7px;fill:#000"  stroke="#000" stroke-width="0.1">0</text><rect x="256.40" y="96.05" width="3.9" height="1.1" fill="#2a2a2a"/><text x="262.40" y="99.40" textLength="6.20" lengthAdjust="spacingAndGlyphs" style="font-family:'Liberation Sans',sans-serif;font-size:7.7px;fill:#000"  stroke="#000" stroke-width="0.1">-6</text><rect x="256.40" y="110.35" width="3.9" height="1.1" fill="#2a2a2a"/><text x="262.40" y="113.70" textLength="9.80" lengthAdjust="spacingAndGlyphs" style="font-family:'Liberation Sans',sans-serif;font-size:7.7px;fill:#000"  stroke="#000" stroke-width="0.1">-12</text><rect x="256.40" y="124.65" width="3.9" height="1.1" fill="#2a2a2a"/><text x="262.40" y="128.00" textLength="9.80" lengthAdjust="spacingAndGlyphs" style="font-family:'Liberation Sans',sans-serif;font-size:7.7px;fill:#000"  stroke="#000" stroke-width="0.1">-18</text><rect x="256.40" y="138.95" width="3.9" height="1.1" fill="#2a2a2a"/><text x="262.40" y="142.30" textLength="9.80" lengthAdjust="spacingAndGlyphs" style="font-family:'Liberation Sans',sans-serif;font-size:7.7px;fill:#000"  stroke="#000" stroke-width="0.1">-24</text><rect x="249.85" y="78.45" width="6.20" height="8.80" rx="1.5" fill="#f6f6f2" stroke="#6e6e6e" stroke-width="0.9"/><rect x="251.50" y="80.7" width="3" height="4.8" fill="#f6d4a0"/><rect x="251.50" y="81" width="3" height="0.9" fill="#eca850"/><rect x="251.50" y="82.7" width="3" height="0.9" fill="#eca850"/><rect x="251.50" y="84.3" width="3" height="0.9" fill="#eca850"/><ellipse cx="238.80" cy="112.20" rx="5.2" ry="4.1" fill="url(#pb)" stroke="#7aa4e0" stroke-width="0.5"/><text x="237.30" y="113.60" textLength="3.00" lengthAdjust="spacingAndGlyphs" style="font-family:'Liberation Sans',sans-serif;font-size:4.2px;font-weight:bold;fill:#10203a" >P</text><ellipse cx="238.80" cy="123.35" rx="5" ry="3.9" fill="url(#gb)" stroke="#747474" stroke-width="0.8"/><text x="235.80" y="124.75" textLength="6.00" lengthAdjust="spacingAndGlyphs" style="font-family:'Liberation Sans',sans-serif;font-size:4.2px;font-weight:bold;fill:#111" >LS</text><ellipse cx="238.80" cy="134.50" rx="5" ry="3.9" fill="url(#gb)" stroke="#747474" stroke-width="0.8"/><text x="235.45" y="135.90" textLength="6.70" lengthAdjust="spacingAndGlyphs" style="font-family:'Liberation Sans',sans-serif;font-size:4.2px;font-weight:bold;fill:#111" >HS</text><rect x="234.30" y="149.60" width="41.80" height="10.70" fill="#9c9c9c"/><rect x="234.30" y="149.60" width="40.90" height="9.80" fill="#727272"/><rect x="235.20" y="150.50" width="40.00" height="8.90" fill="#fff"/><text x="236.50" y="158.10" textLength="10.03" lengthAdjust="spacingAndGlyphs" style="font-family:'Liberation Sans',sans-serif;font-size:8.2px;fill:#000"  stroke="#000" stroke-width="0.1">0.0</text><path d="M267.90 154.50h5.6l-2.8-2.9zM267.90 156.00h5.6l-2.8 2.9z" fill="#000"/><rect x="234.30" y="162.80" width="41.80" height="10.70" fill="#9c9c9c"/><rect x="234.30" y="162.80" width="40.90" height="9.80" fill="#727272"/><rect x="235.20" y="163.70" width="40.00" height="8.90" fill="#fff"/><text x="236.50" y="171.30" textLength="26.08" lengthAdjust="spacingAndGlyphs" style="font-family:'Liberation Sans',sans-serif;font-size:8.2px;fill:#000"  stroke="#000" stroke-width="0.1">10100.0</text><path d="M267.90 167.70h5.6l-2.8-2.9zM267.90 169.20h5.6l-2.8 2.9z" fill="#000"/><rect x="234.30" y="176.00" width="41.80" height="10.70" fill="#9c9c9c"/><rect x="234.30" y="176.00" width="40.90" height="9.80" fill="#727272"/><rect x="235.20" y="176.90" width="40.00" height="8.90" fill="#fff"/><text x="236.50" y="184.50" textLength="14.04" lengthAdjust="spacingAndGlyphs" style="font-family:'Liberation Sans',sans-serif;font-size:8.2px;fill:#000"  stroke="#000" stroke-width="0.1">0.40</text><path d="M267.90 180.90h5.6l-2.8-2.9zM267.90 182.40h5.6l-2.8 2.9z" fill="#000"/><rect x="284.1" y="38.6" width="1" height="157.6" fill="#8c8c8c"/><rect x="516.7" y="38.6" width="1" height="157.6" fill="#8c8c8c"/><rect x="284.1" y="117" width="233.6" height="1" fill="#8c8c8c"/><text x="295.80" y="56.90" textLength="39.20" lengthAdjust="spacingAndGlyphs" style="font-family:'Liberation Sans',sans-serif;font-size:7.8px;fill:#000"  stroke="#000" stroke-width="0.1">Music Level:</text><rect x="350" y="53.05" width="116.70" height="2.5" rx="1" fill="#ccd0d4"/><rect x="350" y="53.40" width="116.70" height="1.8" rx="0.9" fill="#0a3654"/><g transform="translate(404.40,49.20)"><path d="M0.9 0h6a0.9 0.9 0 0 1 0.9 0.9v5L3.9 10.5 0 5.9V0.9a0.9 0.9 0 0 1 0.9-0.9z" fill="#fff" stroke="#505050" stroke-width="0.6"/><path d="M0.4 0.3h7v1.9h-7z" fill="#149a22"/><path d="M1 6h5.8L3.9 9.5z" fill="#149a22"/></g><rect x="474.00" y="50.60" width="9.80" height="8.80" fill="#707070"/><rect x="474.90" y="51.50" width="8.00" height="7.00" fill="#fff"/><path d="M476.3 55.0h5.2M478.9 52.4v5.2" stroke="#000" stroke-width="0.9"/><rect x="486.20" y="51.00" width="15.80" height="8.00" rx="0.8" fill="#fff" stroke="#c0c0c0" stroke-width="1.0"/><text x="488.70" y="57.50" textLength="11.21" lengthAdjust="spacingAndGlyphs" style="font-family:'Liberation Sans',sans-serif;font-size:8.4px;fill:#000"  stroke="#000" stroke-width="0.1">100</text><text x="504.70" y="57.50" textLength="5.60" lengthAdjust="spacingAndGlyphs" style="font-family:'Liberation Sans',sans-serif;font-size:8.4px;fill:#000"  stroke="#000" stroke-width="0.1">%</text><text x="295.80" y="72.90" textLength="32.20" lengthAdjust="spacingAndGlyphs" style="font-family:'Liberation Sans',sans-serif;font-size:7.8px;fill:#000"  stroke="#000" stroke-width="0.1">MIC Level:</text><rect x="350" y="69.05" width="116.70" height="2.5" rx="1" fill="#ccd0d4"/><rect x="350" y="69.40" width="116.70" height="1.8" rx="0.9" fill="#0a3654"/><g transform="translate(404.40,65.20)"><path d="M0.9 0h6a0.9 0.9 0 0 1 0.9 0.9v5L3.9 10.5 0 5.9V0.9a0.9 0.9 0 0 1 0.9-0.9z" fill="#fff" stroke="#505050" stroke-width="0.6"/><path d="M0.4 0.3h7v1.9h-7z" fill="#149a22"/><path d="M1 6h5.8L3.9 9.5z" fill="#149a22"/></g><rect x="474.00" y="66.60" width="9.80" height="8.80" fill="#707070"/><rect x="474.90" y="67.50" width="8.00" height="7.00" fill="#fff"/><path d="M476.3 71.0h5.2M478.9 68.39999999999999v5.2" stroke="#000" stroke-width="0.9"/><rect x="486.20" y="67.00" width="15.80" height="8.00" rx="0.8" fill="#fff" stroke="#c0c0c0" stroke-width="1.0"/><text x="488.70" y="73.50" textLength="11.21" lengthAdjust="spacingAndGlyphs" style="font-family:'Liberation Sans',sans-serif;font-size:8.4px;fill:#000"  stroke="#000" stroke-width="0.1">100</text><text x="504.70" y="73.50" textLength="5.60" lengthAdjust="spacingAndGlyphs" style="font-family:'Liberation Sans',sans-serif;font-size:8.4px;fill:#000"  stroke="#000" stroke-width="0.1">%</text><text x="295.80" y="89.10" textLength="36.20" lengthAdjust="spacingAndGlyphs" style="font-family:'Liberation Sans',sans-serif;font-size:7.8px;fill:#000"  stroke="#000" stroke-width="0.1">Echo Level:</text><rect x="350" y="85.25" width="116.70" height="2.5" rx="1" fill="#ccd0d4"/><rect x="350" y="85.60" width="116.70" height="1.8" rx="0.9" fill="#0a3654"/><g transform="translate(412.90,81.40)"><path d="M0.9 0h6a0.9 0.9 0 0 1 0.9 0.9v5L3.9 10.5 0 5.9V0.9a0.9 0.9 0 0 1 0.9-0.9z" fill="#fff" stroke="#505050" stroke-width="0.6"/><path d="M0.4 0.3h7v1.9h-7z" fill="#149a22"/><path d="M1 6h5.8L3.9 9.5z" fill="#149a22"/></g><rect x="474.00" y="82.80" width="9.80" height="8.80" fill="#707070"/><rect x="474.90" y="83.70" width="8.00" height="7.00" fill="#fff"/><path d="M476.3 87.2h5.2M478.9 84.6v5.2" stroke="#000" stroke-width="0.9"/><rect x="486.20" y="83.20" width="15.80" height="8.00" rx="0.8" fill="#fff" stroke="#c0c0c0" stroke-width="1.0"/><text x="488.70" y="89.70" textLength="11.21" lengthAdjust="spacingAndGlyphs" style="font-family:'Liberation Sans',sans-serif;font-size:8.4px;fill:#000"  stroke="#000" stroke-width="0.1">116</text><text x="504.70" y="89.70" textLength="5.60" lengthAdjust="spacingAndGlyphs" style="font-family:'Liberation Sans',sans-serif;font-size:8.4px;fill:#000"  stroke="#000" stroke-width="0.1">%</text><text x="295.80" y="105.50" textLength="43.90" lengthAdjust="spacingAndGlyphs" style="font-family:'Liberation Sans',sans-serif;font-size:7.8px;fill:#000"  stroke="#000" stroke-width="0.1">Reverb Level:</text><rect x="350" y="101.65" width="116.70" height="2.5" rx="1" fill="#ccd0d4"/><rect x="350" y="102.00" width="116.70" height="1.8" rx="0.9" fill="#0a3654"/><g transform="translate(396.30,97.80)"><path d="M0.9 0h6a0.9 0.9 0 0 1 0.9 0.9v5L3.9 10.5 0 5.9V0.9a0.9 0.9 0 0 1 0.9-0.9z" fill="#fff" stroke="#505050" stroke-width="0.6"/><path d="M0.4 0.3h7v1.9h-7z" fill="#149a22"/><path d="M1 6h5.8L3.9 9.5z" fill="#149a22"/></g><rect x="474.00" y="99.20" width="9.80" height="8.80" fill="#707070"/><rect x="474.90" y="100.10" width="8.00" height="7.00" fill="#fff"/><path d="M476.3 103.60000000000001h5.2M478.9 101.0v5.2" stroke="#000" stroke-width="0.9"/><rect x="486.20" y="99.60" width="15.80" height="8.00" rx="0.8" fill="#fff" stroke="#c0c0c0" stroke-width="1.0"/><text x="490.56" y="106.10" textLength="7.47" lengthAdjust="spacingAndGlyphs" style="font-family:'Liberation Sans',sans-serif;font-size:8.4px;fill:#000"  stroke="#000" stroke-width="0.1">86</text><text x="504.70" y="106.10" textLength="5.60" lengthAdjust="spacingAndGlyphs" style="font-family:'Liberation Sans',sans-serif;font-size:8.4px;fill:#000"  stroke="#000" stroke-width="0.1">%</text><text x="295.90" y="131.60" textLength="34.20" lengthAdjust="spacingAndGlyphs" style="font-family:'Liberation Sans',sans-serif;font-size:7.8px;fill:#000"  stroke="#000" stroke-width="0.1">Limit Level:</text><rect x="350" y="128.05" width="116.70" height="2.5" rx="1" fill="#ccd0d4"/><rect x="350" y="128.40" width="116.70" height="1.8" rx="0.9" fill="#0a3654"/><g transform="translate(459.10,124.20)"><path d="M0.9 0h6a0.9 0.9 0 0 1 0.9 0.9v5L3.9 10.5 0 5.9V0.9a0.9 0.9 0 0 1 0.9-0.9z" fill="#fff" stroke="#505050" stroke-width="0.6"/><path d="M0.4 0.3h7v1.9h-7z" fill="#149a22"/><path d="M1 6h5.8L3.9 9.5z" fill="#149a22"/></g><text x="295.90" y="148.60" textLength="38.30" lengthAdjust="spacingAndGlyphs" style="font-family:'Liberation Sans',sans-serif;font-size:7.8px;fill:#000"  stroke="#000" stroke-width="0.1">Attack Time:</text><rect x="350" y="144.45" width="116.70" height="2.5" rx="1" fill="#ccd0d4"/><rect x="350" y="144.80" width="116.70" height="1.8" rx="0.9" fill="#0a3654"/><g transform="translate(444.10,140.60)"><path d="M0.9 0h6a0.9 0.9 0 0 1 0.9 0.9v5L3.9 10.5 0 5.9V0.9a0.9 0.9 0 0 1 0.9-0.9z" fill="#fff" stroke="#505050" stroke-width="0.6"/><path d="M0.4 0.3h7v1.9h-7z" fill="#149a22"/><path d="M1 6h5.8L3.9 9.5z" fill="#149a22"/></g><text x="295.90" y="165.80" textLength="43.90" lengthAdjust="spacingAndGlyphs" style="font-family:'Liberation Sans',sans-serif;font-size:7.8px;fill:#000"  stroke="#000" stroke-width="0.1">Release Time:</text><rect x="350" y="161.75" width="116.70" height="2.5" rx="1" fill="#ccd0d4"/><rect x="350" y="162.10" width="116.70" height="1.8" rx="0.9" fill="#0a3654"/><g transform="translate(427.50,157.90)"><path d="M0.9 0h6a0.9 0.9 0 0 1 0.9 0.9v5L3.9 10.5 0 5.9V0.9a0.9 0.9 0 0 1 0.9-0.9z" fill="#fff" stroke="#505050" stroke-width="0.6"/><path d="M0.4 0.3h7v1.9h-7z" fill="#149a22"/><path d="M1 6h5.8L3.9 9.5z" fill="#149a22"/></g><text x="295.90" y="183.40" textLength="17.40" lengthAdjust="spacingAndGlyphs" style="font-family:'Liberation Sans',sans-serif;font-size:7.8px;fill:#000"  stroke="#000" stroke-width="0.1">Ratio:</text><rect x="350" y="179.05" width="116.70" height="2.5" rx="1" fill="#ccd0d4"/><rect x="350" y="179.40" width="116.70" height="1.8" rx="0.9" fill="#0a3654"/><g transform="translate(373.90,175.20)"><path d="M0.9 0h6a0.9 0.9 0 0 1 0.9 0.9v5L3.9 10.5 0 5.9V0.9a0.9 0.9 0 0 1 0.9-0.9z" fill="#fff" stroke="#505050" stroke-width="0.6"/><path d="M0.4 0.3h7v1.9h-7z" fill="#149a22"/><path d="M1 6h5.8L3.9 9.5z" fill="#149a22"/></g><rect x="474.90" y="125.00" width="16.40" height="8.10" rx="0.8" fill="#fff" stroke="#c0c0c0" stroke-width="1.0"/><text x="479.50" y="131.60" textLength="6.90" lengthAdjust="spacingAndGlyphs" style="font-family:'Liberation Sans',sans-serif;font-size:8px;fill:#000"  stroke="#000" stroke-width="0.1">14</text><text x="493.00" y="131.60" textLength="12.00" lengthAdjust="spacingAndGlyphs" style="font-family:'Liberation Sans',sans-serif;font-size:8px;fill:#000"  stroke="#000" stroke-width="0.1">dBu</text><rect x="474.90" y="140.60" width="16.40" height="8.30" rx="0.8" fill="#fff" stroke="#c0c0c0" stroke-width="1.0"/><text x="479.50" y="147.50" textLength="6.90" lengthAdjust="spacingAndGlyphs" style="font-family:'Liberation Sans',sans-serif;font-size:8px;fill:#000"  stroke="#000" stroke-width="0.1">45</text><text x="493.00" y="147.50" textLength="8.90" lengthAdjust="spacingAndGlyphs" style="font-family:'Liberation Sans',sans-serif;font-size:8px;fill:#000"  stroke="#000" stroke-width="0.1">ms</text><text x="473.80" y="165.00" textLength="15.90" lengthAdjust="spacingAndGlyphs" style="font-family:'Liberation Sans',sans-serif;font-size:8px;fill:#000"  stroke="#000" stroke-width="0.1">Atk x</text><rect x="493.50" y="158.20" width="15.00" height="8.30" rx="0.8" fill="#fff" stroke="#c0c0c0" stroke-width="1.0"/><text x="497.20" y="165.00" textLength="6.90" lengthAdjust="spacingAndGlyphs" style="font-family:'Liberation Sans',sans-serif;font-size:8px;fill:#000"  stroke="#000" stroke-width="0.1">16</text><rect x="475.80" y="175.00" width="27.20" height="8.00" rx="0.8" fill="#fff" stroke="#c0c0c0" stroke-width="1.0"/><text x="484.50" y="181.70" textLength="9.00" lengthAdjust="spacingAndGlyphs" style="font-family:'Liberation Sans',sans-serif;font-size:8px;fill:#000"  stroke="#000" stroke-width="0.1">3.6</text><text x="530.40" y="56.90" textLength="40.60" lengthAdjust="spacingAndGlyphs" style="font-family:'Liberation Sans',sans-serif;font-size:8.7px;fill:#000"  stroke="#000" stroke-width="0.1">Music HPF:</text><rect x="578.3" y="53.05" width="116.20" height="2.5" rx="1" fill="#ccd0d4"/><rect x="578.3" y="53.40" width="116.20" height="1.8" rx="0.9" fill="#0a3654"/><g transform="translate(616.10,49.20)"><path d="M0.9 0h6a0.9 0.9 0 0 1 0.9 0.9v5L3.9 10.5 0 5.9V0.9a0.9 0.9 0 0 1 0.9-0.9z" fill="#fff" stroke="#505050" stroke-width="0.6"/><path d="M0.4 0.3h7v1.9h-7z" fill="#149a22"/><path d="M1 6h5.8L3.9 9.5z" fill="#149a22"/></g><rect x="702.50" y="49.40" width="35.80" height="9.90" rx="0.8" fill="#fff" stroke="#c0c0c0" stroke-width="1.0"/><text x="704.50" y="57.10" textLength="22.00" lengthAdjust="spacingAndGlyphs" style="font-family:'Liberation Sans',sans-serif;font-size:8.3px;fill:#000"  stroke="#000" stroke-width="0.1">50.6Hz</text><path d="M731.7 53.5h5.4l-2.7-2.9zM731.7 55.1h5.4l-2.7 2.9z" fill="#000"/><text x="575.00" y="73.10" textLength="42.40" lengthAdjust="spacingAndGlyphs" style="font-family:'Liberation Sans',sans-serif;font-size:8.7px;fill:#000"  stroke="#000" stroke-width="0.1">Filter Slope:</text><text x="627.80" y="74.20" textLength="15.50" lengthAdjust="spacingAndGlyphs" style="font-family:'Liberation Sans',sans-serif;font-size:8px;fill:#000"  stroke="#000" stroke-width="0.1">12dB</text><circle cx="653.3" cy="71.7" r="4.2" fill="#fff" stroke="#5a5a5a" stroke-width="0.8"/><text x="669.50" y="74.20" textLength="15.50" lengthAdjust="spacingAndGlyphs" style="font-family:'Liberation Sans',sans-serif;font-size:8px;fill:#000"  stroke="#000" stroke-width="0.1">24dB</text><circle cx="693.4" cy="71.7" r="4.2" fill="#fff" stroke="#2a3a3a" stroke-width="1"/><circle cx="693.4" cy="71.7" r="2" fill="#10202a"/><text x="530.00" y="88.20" textLength="36.20" lengthAdjust="spacingAndGlyphs" style="font-family:'Liberation Sans',sans-serif;font-size:8px;fill:#000"  stroke="#000" stroke-width="0.1">L CH Delay:</text><rect x="580" y="84.75" width="114.50" height="2.5" rx="1" fill="#ccd0d4"/><rect x="580" y="85.10" width="114.50" height="1.8" rx="0.9" fill="#0a3654"/><g transform="translate(577.50,80.90)"><path d="M0.9 0h6a0.9 0.9 0 0 1 0.9 0.9v5L3.9 10.5 0 5.9V0.9a0.9 0.9 0 0 1 0.9-0.9z" fill="#fff" stroke="#505050" stroke-width="0.6"/><path d="M0.4 0.3h7v1.9h-7z" fill="#149a22"/><path d="M1 6h5.8L3.9 9.5z" fill="#149a22"/></g><rect x="703.70" y="81.80" width="17.80" height="8.30" rx="0.8" fill="#fff" stroke="#c0c0c0" stroke-width="1.0"/><text x="707.40" y="88.80" textLength="9.80" lengthAdjust="spacingAndGlyphs" style="font-family:'Liberation Sans',sans-serif;font-size:8.2px;fill:#000"  stroke="#000" stroke-width="0.1">0.0</text><text x="723.60" y="88.80" textLength="8.40" lengthAdjust="spacingAndGlyphs" style="font-family:'Liberation Sans',sans-serif;font-size:8.4px;fill:#000"  stroke="#000" stroke-width="0.1">ms</text><text x="530.00" y="104.80" textLength="37.30" lengthAdjust="spacingAndGlyphs" style="font-family:'Liberation Sans',sans-serif;font-size:8px;fill:#000"  stroke="#000" stroke-width="0.1">R CH Delay:</text><rect x="580" y="101.35" width="114.50" height="2.5" rx="1" fill="#ccd0d4"/><rect x="580" y="101.70" width="114.50" height="1.8" rx="0.9" fill="#0a3654"/><g transform="translate(577.50,97.50)"><path d="M0.9 0h6a0.9 0.9 0 0 1 0.9 0.9v5L3.9 10.5 0 5.9V0.9a0.9 0.9 0 0 1 0.9-0.9z" fill="#fff" stroke="#505050" stroke-width="0.6"/><path d="M0.4 0.3h7v1.9h-7z" fill="#149a22"/><path d="M1 6h5.8L3.9 9.5z" fill="#149a22"/></g><rect x="703.70" y="98.40" width="17.80" height="8.30" rx="0.8" fill="#fff" stroke="#c0c0c0" stroke-width="1.0"/><text x="707.40" y="105.40" textLength="9.80" lengthAdjust="spacingAndGlyphs" style="font-family:'Liberation Sans',sans-serif;font-size:8.2px;fill:#000"  stroke="#000" stroke-width="0.1">0.0</text><text x="723.60" y="105.40" textLength="8.40" lengthAdjust="spacingAndGlyphs" style="font-family:'Liberation Sans',sans-serif;font-size:8.4px;fill:#000"  stroke="#000" stroke-width="0.1">ms</text><rect x="577.3" y="117.9" width="44.20" height="14.80" fill="#ececec"/><path d="M577.3 132.7V117.9H621.5" fill="none" stroke="#b0b0b0" stroke-width="0.7"/><path d="M578.0999999999999 131.89999999999998V118.7H620.7" fill="none" stroke="#fff" stroke-width="0.9"/><path d="M578.3 131.7H620.5V118.9" fill="none" stroke="#a0a0a0" stroke-width="0.9"/><path d="M577.3 132.7H621.5V117.9" fill="none" stroke="#404040" stroke-width="1"/><text x="581.40" y="128.70" textLength="36.40" lengthAdjust="spacingAndGlyphs" style="font-family:'Liberation Sans',sans-serif;font-size:8.8px;fill:#000" stroke="#000" stroke-width="0.2">L CH Mute</text><rect x="635.3" y="117.9" width="44.40" height="14.80" fill="#ececec"/><path d="M635.3 132.7V117.9H679.7" fill="none" stroke="#b0b0b0" stroke-width="0.7"/><path d="M636.0999999999999 131.89999999999998V118.7H678.9000000000001" fill="none" stroke="#fff" stroke-width="0.9"/><path d="M636.3 131.7H678.7V118.9" fill="none" stroke="#a0a0a0" stroke-width="0.9"/><path d="M635.3 132.7H679.7V117.9" fill="none" stroke="#404040" stroke-width="1"/><text x="638.70" y="128.70" textLength="37.90" lengthAdjust="spacingAndGlyphs" style="font-family:'Liberation Sans',sans-serif;font-size:8.8px;fill:#000" stroke="#000" stroke-width="0.2">R CH Mute</text><rect x="28.2" y="204.5" width="861.6999999999999" height="237.7" fill="#000"/><line x1="28.2" x2="889.9" y1="435.46" y2="435.46" stroke="#03120b" stroke-width="1"/><line x1="28.2" x2="889.9" y1="428.86" y2="428.86" stroke="#03120b" stroke-width="1"/><line x1="28.2" x2="889.9" y1="415.66" y2="415.66" stroke="#03120b" stroke-width="1"/><line x1="28.2" x2="889.9" y1="409.05" y2="409.05" stroke="#03120b" stroke-width="1"/><line x1="28.2" x2="889.9" y1="395.85" y2="395.85" stroke="#03120b" stroke-width="1"/><line x1="28.2" x2="889.9" y1="389.24" y2="389.24" stroke="#03120b" stroke-width="1"/><line x1="28.2" x2="889.9" y1="376.04" y2="376.04" stroke="#03120b" stroke-width="1"/><line x1="28.2" x2="889.9" y1="369.44" y2="369.44" stroke="#03120b" stroke-width="1"/><line x1="28.2" x2="889.9" y1="356.23" y2="356.23" stroke="#03120b" stroke-width="1"/><line x1="28.2" x2="889.9" y1="349.63" y2="349.63" stroke="#03120b" stroke-width="1"/><line x1="28.2" x2="889.9" y1="336.42" y2="336.42" stroke="#03120b" stroke-width="1"/><line x1="28.2" x2="889.9" y1="329.82" y2="329.82" stroke="#03120b" stroke-width="1"/><line x1="28.2" x2="889.9" y1="316.61" y2="316.61" stroke="#03120b" stroke-width="1"/><line x1="28.2" x2="889.9" y1="310.01" y2="310.01" stroke="#03120b" stroke-width="1"/><line x1="28.2" x2="889.9" y1="296.81" y2="296.81" stroke="#03120b" stroke-width="1"/><line x1="28.2" x2="889.9" y1="290.20" y2="290.20" stroke="#03120b" stroke-width="1"/><line x1="28.2" x2="889.9" y1="277.00" y2="277.00" stroke="#03120b" stroke-width="1"/><line x1="28.2" x2="889.9" y1="270.39" y2="270.39" stroke="#03120b" stroke-width="1"/><line x1="28.2" x2="889.9" y1="257.19" y2="257.19" stroke="#03120b" stroke-width="1"/><line x1="28.2" x2="889.9" y1="250.59" y2="250.59" stroke="#03120b" stroke-width="1"/><line x1="28.2" x2="889.9" y1="237.38" y2="237.38" stroke="#03120b" stroke-width="1"/><line x1="28.2" x2="889.9" y1="230.78" y2="230.78" stroke="#03120b" stroke-width="1"/><line x1="28.2" x2="889.9" y1="217.57" y2="217.57" stroke="#03120b" stroke-width="1"/><line x1="28.2" x2="889.9" y1="210.97" y2="210.97" stroke="#03120b" stroke-width="1"/><line x1="28.2" x2="889.9" y1="422.50" y2="422.50" stroke="#0a502e" stroke-width="1"/><line x1="28.2" x2="889.9" y1="402.50" y2="402.50" stroke="#0a502e" stroke-width="1"/><line x1="28.2" x2="889.9" y1="382.50" y2="382.50" stroke="#0a502e" stroke-width="1"/><line x1="28.2" x2="889.9" y1="362.50" y2="362.50" stroke="#0a502e" stroke-width="1"/><line x1="28.2" x2="889.9" y1="343.50" y2="343.50" stroke="#0a502e" stroke-width="1"/><line x1="28.2" x2="889.9" y1="323.50" y2="323.50" stroke="#0a502e" stroke-width="1"/><line x1="28.2" x2="889.9" y1="303.50" y2="303.50" stroke="#0a502e" stroke-width="1"/><line x1="28.2" x2="889.9" y1="263.50" y2="263.50" stroke="#0a502e" stroke-width="1"/><line x1="28.2" x2="889.9" y1="243.50" y2="243.50" stroke="#0a502e" stroke-width="1"/><line x1="28.2" x2="889.9" y1="224.50" y2="224.50" stroke="#0a502e" stroke-width="1"/><line y1="204.5" y2="442.2" x1="104.50" x2="104.50" stroke="#0a502e" stroke-width="1"/><line y1="204.5" y2="442.2" x1="149.50" x2="149.50" stroke="#0a502e" stroke-width="1"/><line y1="204.5" y2="442.2" x1="181.50" x2="181.50" stroke="#0a502e" stroke-width="1"/><line y1="204.5" y2="442.2" x1="206.50" x2="206.50" stroke="#0a502e" stroke-width="1"/><line y1="204.5" y2="442.2" x1="226.50" x2="226.50" stroke="#0a502e" stroke-width="1"/><line y1="204.5" y2="442.2" x1="243.50" x2="243.50" stroke="#0a502e" stroke-width="1"/><line y1="204.5" y2="442.2" x1="258.50" x2="258.50" stroke="#0a502e" stroke-width="1"/><line y1="204.5" y2="442.2" x1="271.50" x2="271.50" stroke="#0a502e" stroke-width="1"/><line y1="204.5" y2="442.2" x1="359.50" x2="359.50" stroke="#0a502e" stroke-width="1"/><line y1="204.5" y2="442.2" x1="404.50" x2="404.50" stroke="#0a502e" stroke-width="1"/><line y1="204.5" y2="442.2" x1="436.50" x2="436.50" stroke="#0a502e" stroke-width="1"/><line y1="204.5" y2="442.2" x1="461.50" x2="461.50" stroke="#0a502e" stroke-width="1"/><line y1="204.5" y2="442.2" x1="481.50" x2="481.50" stroke="#0a502e" stroke-width="1"/><line y1="204.5" y2="442.2" x1="498.50" x2="498.50" stroke="#0a502e" stroke-width="1"/><line y1="204.5" y2="442.2" x1="513.50" x2="513.50" stroke="#0a502e" stroke-width="1"/><line y1="204.5" y2="442.2" x1="526.50" x2="526.50" stroke="#0a502e" stroke-width="1"/><line y1="204.5" y2="442.2" x1="614.50" x2="614.50" stroke="#0a502e" stroke-width="1"/><line y1="204.5" y2="442.2" x1="659.50" x2="659.50" stroke="#0a502e" stroke-width="1"/><line y1="204.5" y2="442.2" x1="691.50" x2="691.50" stroke="#0a502e" stroke-width="1"/><line y1="204.5" y2="442.2" x1="716.50" x2="716.50" stroke="#0a502e" stroke-width="1"/><line y1="204.5" y2="442.2" x1="736.50" x2="736.50" stroke="#0a502e" stroke-width="1"/><line y1="204.5" y2="442.2" x1="753.50" x2="753.50" stroke="#0a502e" stroke-width="1"/><line y1="204.5" y2="442.2" x1="768.50" x2="768.50" stroke="#0a502e" stroke-width="1"/><line y1="204.5" y2="442.2" x1="781.50" x2="781.50" stroke="#0a502e" stroke-width="1"/><line y1="204.5" y2="442.2" x1="869.50" x2="869.50" stroke="#0a502e" stroke-width="1"/><line y1="204.5" y2="442.2" x1="283.10" x2="283.10" stroke="#0a7210" stroke-width="1.7"/><line y1="204.5" y2="442.2" x1="538.50" x2="538.50" stroke="#0c9410" stroke-width="1"/><line y1="204.5" y2="442.2" x1="793.50" x2="793.50" stroke="#0c9410" stroke-width="1"/><line x1="28.2" x2="889.9" y1="283.60" y2="283.60" stroke="#0a9a10" stroke-width="1.2"/><rect x="28.2" y="204.5" width="861.6999999999999" height="237.7" fill="none" stroke="#0aa010" stroke-width="1.2"/><clipPath id="cp"><rect x="28.2" y="204.5" width="861.6999999999999" height="237.7"/></clipPath><polyline clip-path="url(#cp)" points="124.4,452.80 127.4,446.38 130.4,439.93 133.4,433.38 136.4,426.78 139.4,420.18 142.4,413.62 145.4,407.17 148.4,400.86 151.4,394.76 154.4,388.84 157.4,383.06 160.4,377.33 163.4,371.61 166.4,365.90 169.4,360.25 172.4,354.68 175.4,349.22 178.4,343.91 181.4,338.77 184.4,333.70 187.4,328.75 190.4,324.19 193.4,320.26 196.4,316.75 199.4,313.54 202.4,310.58 205.4,307.83 208.4,305.24 211.4,302.69 214.4,300.23 217.4,297.92 220.4,295.81 223.4,293.99 226.4,292.50 229.4,291.27 232.4,290.16 235.4,289.18 238.4,288.33 241.4,287.60 244.4,286.99 247.4,286.45 250.4,285.98 253.4,285.57 256.4,285.22 259.4,284.93 262.4,284.68 265.4,284.46 268.4,284.27 271.4,284.11 274.4,283.94 277.4,283.79 280.4,283.67 283.4,283.60 286.4,283.57 289.4,283.55 292.4,283.54 295.4,283.52 298.4,283.51 300,283.5 888.4,283.5" fill="none" stroke="#90e8f0" stroke-width="1.35"/><text x="7.00" y="207.67" textLength="18.50" lengthAdjust="spacingAndGlyphs" style="font-family:'Liberation Sans',sans-serif;font-size:9px;font-weight:bold;fill:#fff" >12dB</text><text x="11.60" y="247.28" textLength="13.90" lengthAdjust="spacingAndGlyphs" style="font-family:'Liberation Sans',sans-serif;font-size:9px;font-weight:bold;fill:#fff" >6dB</text><text x="11.60" y="286.90" textLength="13.90" lengthAdjust="spacingAndGlyphs" style="font-family:'Liberation Sans',sans-serif;font-size:9px;font-weight:bold;fill:#fff" >0dB</text><text x="8.60" y="326.52" textLength="16.90" lengthAdjust="spacingAndGlyphs" style="font-family:'Liberation Sans',sans-serif;font-size:9px;font-weight:bold;fill:#fff" >-6dB</text><text x="5.30" y="366.13" textLength="20.20" lengthAdjust="spacingAndGlyphs" style="font-family:'Liberation Sans',sans-serif;font-size:9px;font-weight:bold;fill:#fff" >-12dB</text><text x="5.30" y="405.75" textLength="20.20" lengthAdjust="spacingAndGlyphs" style="font-family:'Liberation Sans',sans-serif;font-size:9px;font-weight:bold;fill:#fff" >-18dB</text><text x="5.30" y="445.37" textLength="20.20" lengthAdjust="spacingAndGlyphs" style="font-family:'Liberation Sans',sans-serif;font-size:9px;font-weight:bold;fill:#fff" >-24dB</text><text x="96.08" y="449.90" textLength="17.65" lengthAdjust="spacingAndGlyphs" style="font-family:'Liberation Sans',sans-serif;font-size:9px;font-weight:bold;fill:#fff" >20Hz</text><text x="195.38" y="449.90" textLength="17.65" lengthAdjust="spacingAndGlyphs" style="font-family:'Liberation Sans',sans-serif;font-size:9px;font-weight:bold;fill:#fff" >50Hz</text><text x="272.38" y="449.90" textLength="21.85" lengthAdjust="spacingAndGlyphs" style="font-family:'Liberation Sans',sans-serif;font-size:9px;font-weight:bold;fill:#fff" >100Hz</text><text x="349.28" y="449.90" textLength="21.85" lengthAdjust="spacingAndGlyphs" style="font-family:'Liberation Sans',sans-serif;font-size:9px;font-weight:bold;fill:#fff" >200Hz</text><text x="451.08" y="449.90" textLength="21.85" lengthAdjust="spacingAndGlyphs" style="font-family:'Liberation Sans',sans-serif;font-size:9px;font-weight:bold;fill:#fff" >500Hz</text><text x="527.25" y="449.90" textLength="18.90" lengthAdjust="spacingAndGlyphs" style="font-family:'Liberation Sans',sans-serif;font-size:9px;font-weight:bold;fill:#fff" >1KHz</text><text x="603.85" y="449.90" textLength="18.90" lengthAdjust="spacingAndGlyphs" style="font-family:'Liberation Sans',sans-serif;font-size:9px;font-weight:bold;fill:#fff" >2KHz</text><text x="705.25" y="449.90" textLength="18.90" lengthAdjust="spacingAndGlyphs" style="font-family:'Liberation Sans',sans-serif;font-size:9px;font-weight:bold;fill:#fff" >5KHz</text><text x="781.95" y="449.90" textLength="23.10" lengthAdjust="spacingAndGlyphs" style="font-family:'Liberation Sans',sans-serif;font-size:9px;font-weight:bold;fill:#fff" >10KHz</text><text x="858.95" y="449.90" textLength="23.10" lengthAdjust="spacingAndGlyphs" style="font-family:'Liberation Sans',sans-serif;font-size:9px;font-weight:bold;fill:#fff" >20KHz</text><rect x="199.9" y="280.1" width="15.1" height="6.8" fill="#fff"/><text x="201.10" y="285.80" textLength="13.00" lengthAdjust="spacingAndGlyphs" style="font-family:'Liberation Sans',sans-serif;font-size:6.4px;fill:#222"  stroke="#222" stroke-width="0.1">HPF</text><circle cx="283.8" cy="283.4" r="4.8" fill="#eef0f6" stroke="#c8ccd8" stroke-width="0.6"/><text x="282.30" y="285.60" textLength="3.10" lengthAdjust="spacingAndGlyphs" style="font-family:'Liberation Sans',sans-serif;font-size:6px;fill:#4868b0" stroke="none">1</text><circle cx="437.6" cy="283.4" r="4.8" fill="#eef0f6" stroke="#c8ccd8" stroke-width="0.6"/><text x="436.10" y="285.60" textLength="3.10" lengthAdjust="spacingAndGlyphs" style="font-family:'Liberation Sans',sans-serif;font-size:6px;fill:#4868b0" stroke="none">2</text><circle cx="582.6" cy="283.4" r="4.8" fill="#eef0f6" stroke="#c8ccd8" stroke-width="0.6"/><text x="581.10" y="285.60" textLength="3.10" lengthAdjust="spacingAndGlyphs" style="font-family:'Liberation Sans',sans-serif;font-size:6px;fill:#4868b0" stroke="none">3</text><circle cx="667.9" cy="283.4" r="4.8" fill="#eef0f6" stroke="#c8ccd8" stroke-width="0.6"/><text x="666.39" y="285.60" textLength="3.10" lengthAdjust="spacingAndGlyphs" style="font-family:'Liberation Sans',sans-serif;font-size:6px;fill:#4868b0" stroke="none">4</text><circle cx="793.8" cy="283.4" r="4.8" fill="#eef0f6" stroke="#c8ccd8" stroke-width="0.6"/><text x="792.30" y="285.60" textLength="3.10" lengthAdjust="spacingAndGlyphs" style="font-family:'Liberation Sans',sans-serif;font-size:6px;fill:#4868b0" stroke="none">5</text><text x="273.70" y="296.20" textLength="20.61" lengthAdjust="spacingAndGlyphs" style="font-family:'Liberation Sans',sans-serif;font-size:8.8px;font-weight:bold;fill:#fff" >0.0dB</text><text x="272.43" y="306.00" textLength="23.14" lengthAdjust="spacingAndGlyphs" style="font-family:'Liberation Sans',sans-serif;font-size:8.8px;font-weight:bold;fill:#fff" >Q:1.00</text><text x="267.80" y="315.80" textLength="32.39" lengthAdjust="spacingAndGlyphs" style="font-family:'Liberation Sans',sans-serif;font-size:8.8px;font-weight:bold;fill:#fff" >101.00Hz</text><defs><linearGradient id="bo" x1="0" y1="0" x2="0" y2="1"><stop offset="0" stop-color="#f8f8e6"/><stop offset="0.28" stop-color="#e6eabc"/><stop offset="0.45" stop-color="#b6c660"/><stop offset="0.55" stop-color="#b6c660"/><stop offset="0.72" stop-color="#e6eabc"/><stop offset="1" stop-color="#fcfcf4"/></linearGradient><linearGradient id="bf" x1="0" y1="0" x2="0" y2="1"><stop offset="0" stop-color="#f4f4f4"/><stop offset="0.45" stop-color="#ececec"/><stop offset="0.46" stop-color="#d8d8d8"/><stop offset="0.8" stop-color="#dcdcdc"/><stop offset="0.84" stop-color="#fff"/><stop offset="1" stop-color="#fff"/></linearGradient></defs><rect x="13.5" y="464.2" width="40.00" height="11.40" fill="url(#bo)"/><path d="M13.5 475.6V464.2H53.5" fill="none" stroke="#3a5a60" stroke-width="0.8"/><path d="M13.5 475.6H53.5V464.2" fill="none" stroke="#1c3640" stroke-width="1"/><text x="18.70" y="472.70" textLength="30.10" lengthAdjust="spacingAndGlyphs" style="font-family:'Liberation Sans',sans-serif;font-size:8.3px;fill:#000" stroke="#000" stroke-width="0.15">Connect</text><rect x="59.6" y="464.2" width="41.80" height="11.40" fill="url(#bf)"/><path d="M59.6 475.6V464.2H101.4" fill="none" stroke="#a4a4a4" stroke-width="0.7"/><path d="M60.4 474.8V465.0H100.60000000000001" fill="none" stroke="#fff" stroke-width="0.8"/><path d="M59.6 475.6H101.4V464.2" fill="none" stroke="#484848" stroke-width="1"/><text x="60.40" y="472.70" textLength="40.30" lengthAdjust="spacingAndGlyphs" style="font-family:'Liberation Sans',sans-serif;font-size:8.3px;fill:#000" stroke="#000" stroke-width="0.15">Disconnect</text><rect x="318.3" y="464.2" width="36.20" height="11.40" fill="url(#bf)"/><path d="M318.3 475.6V464.2H354.5" fill="none" stroke="#a4a4a4" stroke-width="0.7"/><path d="M319.1 474.8V465.0H353.7" fill="none" stroke="#fff" stroke-width="0.8"/><path d="M318.3 475.6H354.5V464.2" fill="none" stroke="#484848" stroke-width="1"/><text x="319.20" y="472.70" textLength="35.00" lengthAdjust="spacingAndGlyphs" style="font-family:'Liberation Sans',sans-serif;font-size:8.3px;fill:#000" stroke="#000" stroke-width="0.15">EQ Reset</text><rect x="363.4" y="464.2" width="35.10" height="11.40" fill="url(#bf)"/><path d="M363.4 475.6V464.2H398.5" fill="none" stroke="#a4a4a4" stroke-width="0.7"/><path d="M364.2 474.8V465.0H397.7" fill="none" stroke="#fff" stroke-width="0.8"/><path d="M363.4 475.6H398.5V464.2" fill="none" stroke="#484848" stroke-width="1"/><text x="365.00" y="472.70" textLength="31.00" lengthAdjust="spacingAndGlyphs" style="font-family:'Liberation Sans',sans-serif;font-size:8.3px;fill:#000" stroke="#000" stroke-width="0.15">EQ pass</text><rect x="733.3" y="464.2" width="32.20" height="11.40" fill="url(#bo)"/><path d="M733.3 475.6V464.2H765.5" fill="none" stroke="#3a5a60" stroke-width="0.8"/><path d="M733.3 475.6H765.5V464.2" fill="none" stroke="#1c3640" stroke-width="1"/><text x="736.70" y="472.70" textLength="25.80" lengthAdjust="spacingAndGlyphs" style="font-family:'Liberation Sans',sans-serif;font-size:8.3px;fill:#000" stroke="#000" stroke-width="0.15">Manual</text><rect x="772.6" y="464.2" width="32.00" height="11.40" fill="url(#bf)"/><path d="M772.6 475.6V464.2H804.6" fill="none" stroke="#a4a4a4" stroke-width="0.7"/><path d="M773.4 474.8V465.0H803.8000000000001" fill="none" stroke="#fff" stroke-width="0.8"/><path d="M772.6 475.6H804.6V464.2" fill="none" stroke="#484848" stroke-width="1"/><text x="781.00" y="472.70" textLength="15.30" lengthAdjust="spacingAndGlyphs" style="font-family:'Liberation Sans',sans-serif;font-size:8.3px;fill:#000" stroke="#000" stroke-width="0.15">Auto</text><rect x="821.2" y="464.2" width="32.20" height="11.40" fill="url(#bo)"/><path d="M821.2 475.6V464.2H853.4" fill="none" stroke="#3a5a60" stroke-width="0.8"/><path d="M821.2 475.6H853.4V464.2" fill="none" stroke="#1c3640" stroke-width="1"/><text x="829.90" y="472.70" textLength="15.60" lengthAdjust="spacingAndGlyphs" style="font-family:'Liberation Sans',sans-serif;font-size:8.3px;fill:#000" stroke="#000" stroke-width="0.15">Sing</text><rect x="858.5" y="464.2" width="32.40" height="11.40" fill="url(#bf)"/><path d="M858.5 475.6V464.2H890.9" fill="none" stroke="#a4a4a4" stroke-width="0.7"/><path d="M859.3 474.8V465.0H890.1" fill="none" stroke="#fff" stroke-width="0.8"/><path d="M858.5 475.6H890.9V464.2" fill="none" stroke="#484848" stroke-width="1"/><text x="864.00" y="472.70" textLength="21.50" lengthAdjust="spacingAndGlyphs" style="font-family:'Liberation Sans',sans-serif;font-size:8.3px;fill:#000" stroke="#000" stroke-width="0.15">Disco</text></svg>
</body></html>
